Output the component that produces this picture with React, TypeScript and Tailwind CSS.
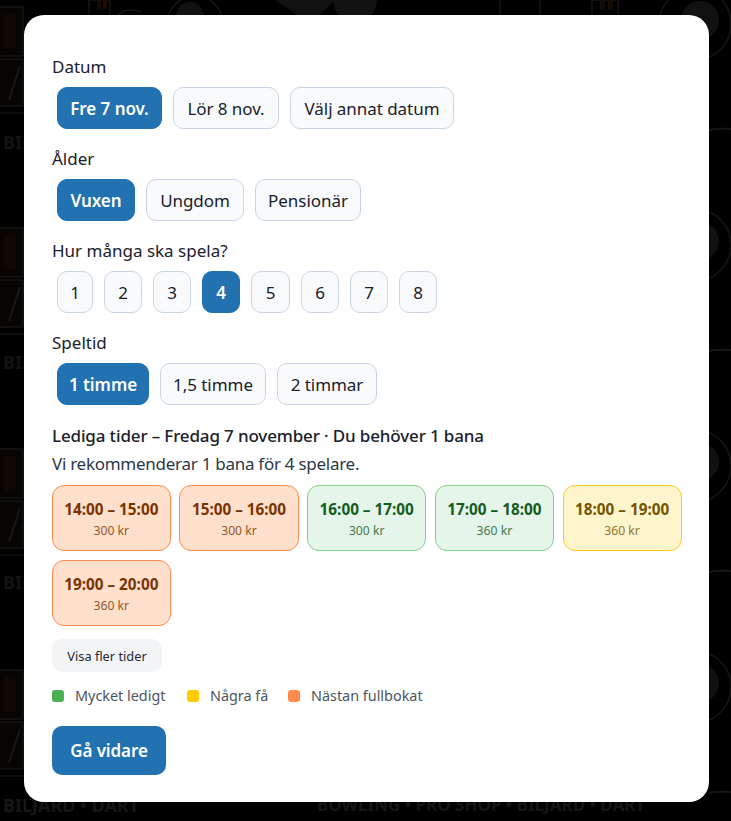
const sans = "font-['Noto_Sans','Open_Sans',sans-serif]"

type Slot = { time: string; price: string; tone: "orange" | "green" | "yellow" }

const slots: Slot[] = [
  { time: "14:00 – 15:00", price: "300 kr", tone: "orange" },
  { time: "15:00 – 16:00", price: "300 kr", tone: "orange" },
  { time: "16:00 – 17:00", price: "300 kr", tone: "green" },
  { time: "17:00 – 18:00", price: "360 kr", tone: "green" },
  { time: "18:00 – 19:00", price: "360 kr", tone: "yellow" },
  { time: "19:00 – 20:00", price: "360 kr", tone: "orange" },
]

const toneClass = {
  orange: "bg-[#ffe0cc] border-[#ff8c4f] text-[#7a3300]",
  green: "bg-[#e5f5ea] border-[#7fd18e] text-[#145c1e]",
  yellow: "bg-[#fff5cc] border-[#ffcc12] text-[#735400]",
}

const playerWidth: Record<string, string> = {
  "1": "w-[36px]",
  "5": "w-[39px]",
}

function Chip({ label, active, className = "" }: { label: string; active?: boolean; className?: string }) {
  return (
    <button
      className={`h-[42px] rounded-[10px] border pt-[2px] text-[17px] tracking-[-0.05px] ${
        active
          ? "bg-[#2271b1] border-[#2271b1] text-white font-semibold"
          : "bg-[#f8fafc] border-[#cbd5e1] text-[#1a202c]"
      } ${className}`}
    >
      {label}
    </button>
  )
}

// faint logo pattern behind the card, repeats every 221px down the page
function Background() {
  const rows = [0, 221, 442, 663]
  return (
    <div className="absolute inset-0 overflow-hidden bg-black">
      <svg width="731" height="821" fill="none" className="absolute inset-0">
        {rows.map((y) => (
          <g key={y} transform={`translate(0 ${y})`}>
            <path d="M0 7h23v49H0M0 59h23v47H0" stroke="#141414" strokeWidth="1.5" fill="#070402" />
            <path d="M9 100l11-34" stroke="#181818" strokeWidth="2" />
            <path d="M4 14h12v35H4z" fill="#0e0702" />
            <path d="M0 113h24" stroke="#121212" strokeWidth="1.5" />
            <circle cx="695" cy="24" r="36" stroke="#161616" strokeWidth="1.5" />
            <circle cx="700" cy="20" r="19" fill="#111111" />
            <path d="M709 130c8-2 14-1 22-1" stroke="#161616" strokeWidth="2" />
          </g>
        ))}
        <path d="M89 0h21v16H89zM592 0h26v16h-26z" stroke="#161616" strokeWidth="1.5" />
        <path d="M97 0h4v9h-4zM103 0h4v9h-4zM600 0h5v9h-5zM608 0h5v9h-5z" fill="#170d04" />
        <circle cx="195" cy="24" r="28" stroke="#171717" strokeWidth="1.5" />
        <circle cx="190" cy="16" r="14" fill="#111111" />
        <path d="M117 16c6-6 16-8 24-4M420 16h170M500 0v16M540 0v16" stroke="#161616" strokeWidth="1.5" />
        <path d="M275 0l22 15h22l16-15z" fill="#111111" />
        <circle cx="355" cy="0" r="22" fill="#121212" />
      </svg>
      {[128, 348, 568].map((y) => (
        <div
          key={y}
          className="absolute left-[3px] text-[18px] leading-[28px] font-bold text-[#131313]"
          style={{ top: y }}
        >
          BIL
        </div>
      ))}
      <div className="absolute left-[3px] top-[791px] whitespace-nowrap text-[18px] leading-[28px] font-bold text-[#161616]">
        BILJARD • DART
      </div>
      <div className="absolute left-[317px] top-[791px] whitespace-nowrap text-[17px] leading-[28px] font-bold text-[#161616]">
        BOWLING • PRO SHOP • BILJARD • DART
      </div>
    </div>
  )
}

export default function App() {
  return (
    <div className={`relative h-[821px] w-[731px] overflow-hidden ${sans}`}>
      <Background />
      <div className="absolute left-[24px] top-[15px] h-[787px] w-[685px] rounded-[20px] bg-white px-[28px] pt-[40px]">
        <Section title="Datum">
          <Chip label="Fre 7 nov." active className="w-[105px]" />
          <Chip label="Lör 8 nov." className="w-[106px]" />
          <Chip label="Välj annat datum" className="w-[164px]" />
        </Section>
        <Section title="Ålder">
          <Chip label="Vuxen" active className="w-[78px]" />
          <Chip label="Ungdom" className="w-[98px]" />
          <Chip label="Pensionär" className="w-[106px]" />
        </Section>
        <Section title="Hur många ska spela?">
          {["1", "2", "3", "4", "5", "6", "7", "8"].map((n) => (
            <Chip key={n} label={n} active={n === "4"} className={playerWidth[n] ?? "w-[38px]"} />
          ))}
        </Section>
        <Section title="Speltid">
          <Chip label="1 timme" active className="w-[92px]" />
          <Chip label="1,5 timme" className="w-[106px]" />
          <Chip label="2 timmar" className="w-[100px]" />
        </Section>

        <div className="mt-[19px] text-[17px] font-medium leading-[24px] tracking-[-0.15px] text-[#1a202c]">
          Lediga tider – Fredag 7 november · Du behöver 1 bana
        </div>
        <div className="mt-[4px] text-[17px] leading-[24px] tracking-[-0.27px] text-[#2d3748]">
          Vi rekommenderar 1 bana för 4 spelare.
        </div>

        <div className="mt-[9px] ml-[-0.3px] grid w-[630px] grid-cols-5 gap-x-[8.5px] gap-y-[9px]">
          {slots.map((s) => (
            <div
              key={s.time}
              className={`flex h-[66px] flex-col items-center justify-center rounded-[12px] border pt-[3px] ${toneClass[s.tone]}`}
            >
              <span className="text-[15.3px] font-bold leading-[20px]">{s.time}</span>
              <span className="mt-[3px] text-[12.2px] leading-[18px] opacity-80">{s.price}</span>
            </div>
          ))}
        </div>

        <button className="mt-[13px] block h-[33px] w-[110px] rounded-[10px] bg-[#f3f4f6] pt-[2px] text-[12.8px] text-[#1f2937]">
          Visa fler tider
        </button>

        <div className="mt-[14px] flex h-[20px] items-center text-[14.4px] text-[#4b5563]">
          <Legend color="bg-[#4caf50]" label="Mycket ledigt" className="w-[135px]" />
          <Legend color="bg-[#ffcc00]" label="Några få" className="w-[101px]" />
          <Legend color="bg-[#ff8c4f]" label="Nästan fullbokat" />
        </div>

        <button className="mt-[20px] block h-[49px] w-[114px] rounded-[10px] bg-[#2271b1] text-[17px] font-semibold tracking-[-0.1px] text-white">
          Gå vidare
        </button>
      </div>
    </div>
  )
}

function Section({ title, children }: { title: string; children: React.ReactNode }) {
  return (
    <div className="mb-[18px]">
      <div className="h-[24px] text-[17px] leading-[24px] text-[#1a202c]">{title}</div>
      <div className="mt-[8px] flex gap-[11px] pl-[5px]">{children}</div>
    </div>
  )
}

function Legend({ color, label, className = "" }: { color: string; label: string; className?: string }) {
  return (
    <div className={`flex items-center gap-[11px] ${className}`}>
      <span className={`h-[12px] w-[12px] rounded-[3px] ${color}`} />
      <span>{label}</span>
    </div>
  )
}
